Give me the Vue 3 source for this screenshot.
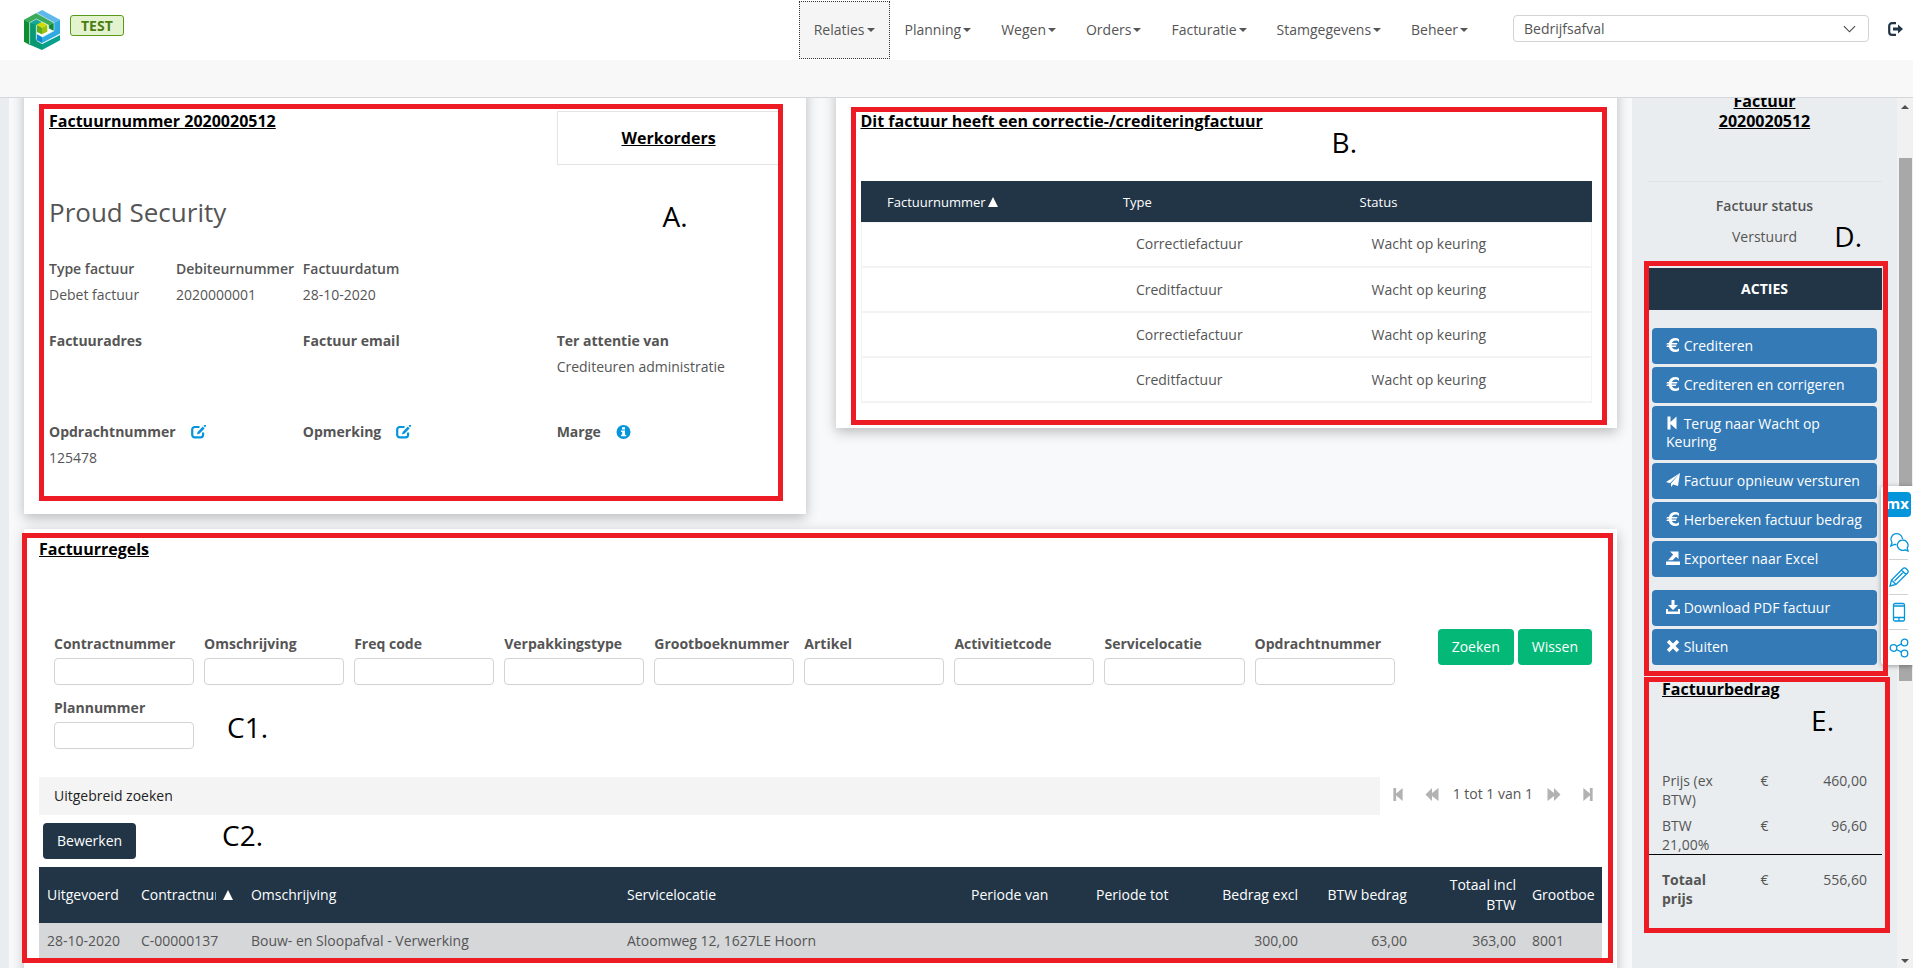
<script setup>
import { ref } from 'vue'

const menu = ['Relaties', 'Planning', 'Wegen', 'Orders', 'Facturatie', 'Stamgegevens', 'Beheer']
const afdeling = ref('Bedrijfsafval')

const correcties = [
  { type: 'Correctiefactuur', status: 'Wacht op keuring' },
  { type: 'Creditfactuur', status: 'Wacht op keuring' },
  { type: 'Correctiefactuur', status: 'Wacht op keuring' },
  { type: 'Creditfactuur', status: 'Wacht op keuring' },
]

const filters = [
  'Contractnummer', 'Omschrijving', 'Freq code', 'Verpakkingstype', 'Grootboeknummer',
  'Artikel', 'Activitietcode', 'Servicelocatie', 'Opdrachtnummer', 'Plannummer',
]

const kolommen = [
  { naam: 'Uitgevoerd', aandeel: 94, waarde: '28-10-2020' },
  { naam: 'Contractnummer', aandeel: 110, waarde: 'C-00000137', gesorteerd: true },
  { naam: 'Omschrijving', aandeel: 376, waarde: 'Bouw- en Sloopafval - Verwerking' },
  { naam: 'Servicelocatie', aandeel: 344, waarde: 'Atoomweg 12, 1627LE Hoorn' },
  { naam: 'Periode van', aandeel: 125, waarde: '' },
  { naam: 'Periode tot', aandeel: 109, waarde: '' },
  { naam: 'Bedrag excl', aandeel: 109, waarde: '300,00', rechts: true },
  { naam: 'BTW bedrag', aandeel: 109, waarde: '63,00', rechts: true },
  { naam: 'Totaal incl BTW', aandeel: 109, waarde: '363,00', rechts: true },
  { naam: 'Grootboe', aandeel: 78, waarde: '8001' },
]
const totaalAandeel = kolommen.reduce((som, k) => som + k.aandeel, 0)

const iconen = {
  euro: 'M13 1.2v3C12 3 10.900 2.600 9.600 2.600 7.700 2.600 6.500 3.500 6 5h5.500l-.6 1.500H5.700v1h4.800L9.900 9H6c.5 1.500 1.700 2.400 3.600 2.400 1.300 0 2.400-.4 3.400-1.500v3c-1 .7-2.200 1.100-3.700 1.100C6 14 3.600 12.200 2.900 9H.4L1 7.500h1.700v-1H.4L1 5h1.900C3.600 1.800 6 0 9.300 0c1.500 0 2.700.4 3.700 1.200z',
  eerste: 'M1.500 .5h3v5.400L10.500 .5v13l-6-5.400V13.500h-3z',
  verstuur: 'M14 0 0 9l4 1.300zM14 0 5 10.500V14l2.200-2.600L12 13z',
  export: 'M0 10.500h14V14H0zM4 0.500h8.500V8L10 5.800 6.500 9.200H2L7.200 3.600z',
  download: 'M5.500 0h3v5H12L7 10 2 5h3.500zM0 9h2v2.500h10V9h2v5H0z',
  sluiten: 'M3.300.8 7 4.500 10.700.8l2.500 2.500L9.500 7l3.700 3.700-2.500 2.500L7 9.500l-3.700 3.700L.8 10.700 4.500 7 .8 3.300z',
}
const acties = [
  { tekst: 'Crediteren', icoon: 'euro' },
  { tekst: 'Crediteren en corrigeren', icoon: 'euro' },
  { tekst: 'Terug naar Wacht op Keuring', icoon: 'eerste' },
  { tekst: 'Factuur opnieuw versturen', icoon: 'verstuur' },
  { tekst: 'Herbereken factuur bedrag', icoon: 'euro' },
  { tekst: 'Exporteer naar Excel', icoon: 'export' },
  { tekst: 'Download PDF factuur', icoon: 'download', nieuweGroep: true },
  { tekst: 'Sluiten', icoon: 'sluiten' },
]

const bedragen = [
  { naam: 'Prijs (ex BTW)', bedrag: '460,00' },
  { naam: 'BTW 21,00%', bedrag: '96,60' },
  { naam: 'Totaal prijs', bedrag: '556,60', totaal: true },
]
</script>

<template>
  <div class="app">
    <header class="topbar">
      <svg class="logo" viewBox="0 0 108 120" aria-label="Logo" role="img">
        <path d="M54 0 108 29 90 38 52 18 38 9z" fill="#5eb9ea" />
        <path d="M108 29v42L54 100V82l36-19V38z" fill="#2fa9e2" />
        <path d="M38 72 54 81v19L38 90z" fill="#0f86d2" />
        <path d="M0 29 37 9 90 38 74 46 37 27 17 38z" fill="#3bab5b" />
        <path d="M90 38v25L74 55V46z" fill="#118a36" />
        <path d="M0 29 17 38v67L0 95z" fill="#0e8e33" />
        <path d="M17 38 37 27 54 36 37 45v44l17 12v19L17 104z" fill="#079a72" />
        <path d="M17 38 37 27 54 36 37 45z" fill="#17a89a" />
        <path d="M54 102 108 75v16L54 120z" fill="#07a08c" />
        <path d="M54 36 70 44 54 53 38 44z" fill="#d3dc00" />
        <path d="M38 44 54 53v20L38 66z" fill="#5fae1b" />
        <path d="M70 44v21L54 73V53z" fill="#9dc20c" />
        <path d="M17 102V38l20-11 37 19v10M37 88V45M38 92l16 9 54-29M37 9l53 29v24L54 82" fill="none" stroke="#d9f0ea" stroke-width="2" />
      </svg>
      <span class="omgeving">TEST</span>
      <nav class="menu">
        <button v-for="(item, i) in menu" :key="item" type="button" :class="{ actief: i === 0 }">
          {{ item }}<i class="caret"></i>
        </button>
      </nav>
      <div class="keuze">
        <select v-model="afdeling" aria-label="Afdeling">
          <option>Bedrijfsafval</option>
        </select>
        <svg viewBox="0 0 14 8" aria-hidden="true"><path d="M1 1l6 6 6-6" fill="none" stroke="#444" stroke-width="1.200" /></svg>
      </div>
      <button type="button" class="uitloggen" aria-label="Uitloggen">
        <svg viewBox="0 0 15 14"><path d="M8 1.200H4A2.800 2.800 0 0 0 1.200 4v6A2.800 2.800 0 0 0 4 12.800h4" fill="none" stroke="#213547" stroke-width="2.200" /><path d="M5 5.500h5V2.500L15 7l-5 4.500v-3H5z" fill="#213547" /></svg>
      </button>
    </header>
    <div class="subbar"></div>

    <div class="body">
      <main class="inhoud">
        <div class="bovenrij">
          <section class="kaart factuur">
            <div class="kop">
              <h2>Factuurnummer 2020020512</h2>
              <a href="#" class="werkorders">Werkorders</a>
            </div>
            <h1>Proud Security</h1>
            <dl class="velden zes">
              <div><dt>Type factuur</dt><dd>Debet factuur</dd></div>
              <div><dt>Debiteurnummer</dt><dd>2020000001</dd></div>
              <div><dt>Factuurdatum</dt><dd>28-10-2020</dd></div>
            </dl>
            <dl class="velden drie">
              <div><dt>Factuuradres</dt><dd></dd></div>
              <div><dt>Factuur email</dt><dd></dd></div>
              <div><dt>Ter attentie van</dt><dd>Crediteuren administratie</dd></div>
            </dl>
            <dl class="velden drie laatste">
              <div v-for="veld in ['Opdrachtnummer', 'Opmerking']" :key="veld">
                <dt>
                  {{ veld }}
                  <button type="button" class="klein" :aria-label="veld + ' wijzigen'">
                    <svg viewBox="0 0 15 14"><path d="M8.500 2H3.800A2.600 2.600 0 0 0 1.200 4.600v5.200a2.600 2.600 0 0 0 2.600 2.600H9.500a2.600 2.600 0 0 0 2.600-2.600V7.500" fill="none" stroke="#0595db" stroke-width="2.200" /><path d="M6 9.500 6.600 7 11.800 1.600l1.800 1.800L8.400 8.800zM12.500.9l.9-.9h1.600v1.300l-1 1z" fill="#0595db" /></svg>
                  </button>
                </dt>
                <dd>{{ veld === 'Opdrachtnummer' ? '125478' : '' }}</dd>
              </div>
              <div>
                <dt>
                  Marge
                  <button type="button" class="klein" aria-label="Uitleg marge">
                    <svg viewBox="0 0 14 14"><circle cx="7" cy="7" r="7" fill="#0595db" /><path d="M5.500 2.200h3v2.300h-3zM4.500 5.500h4v4.200h1.200v1.500H4.500V9.700h1.200V7H4.500z" fill="#fff" /></svg>
                  </button>
                </dt>
                <dd></dd>
              </div>
            </dl>
            <div class="kader kader-a"></div>
            <span class="letter letter-a">A.</span>
          </section>

          <section class="kaart correctie">
            <h2>Dit factuur heeft een correctie-/crediteringfactuur</h2>
            <table>
              <thead>
                <tr><th>Factuurnummer<i class="sorteer"></i></th><th>Type</th><th>Status</th></tr>
              </thead>
              <tbody>
                <tr v-for="(rij, i) in correcties" :key="i">
                  <td></td><td>{{ rij.type }}</td><td>{{ rij.status }}</td>
                </tr>
              </tbody>
            </table>
            <div class="kader kader-b"></div>
            <span class="letter letter-b">B.</span>
          </section>
        </div>

        <section class="kaart regels">
          <h2>Factuurregels</h2>
          <form class="zoeken" @submit.prevent>
            <div class="filters">
              <div v-for="(naam, i) in filters" :key="naam">
                <label :for="'filter-' + i">{{ naam }}</label>
                <input :id="'filter-' + i" type="text" />
              </div>
            </div>
            <div class="knoppen">
              <button type="submit">Zoeken</button>
              <button type="reset">Wissen</button>
            </div>
          </form>
          <div class="balk">
            <button type="button" class="uitgebreid">Uitgebreid zoeken</button>
            <div class="bladeren">
              <button type="button" aria-label="Eerste"><svg viewBox="0 0 10 14"><path d="M0 0h3v6L10 0v14L3 8v6H0z" /></svg></button>
              <button type="button" aria-label="Vorige"><svg class="breed" viewBox="0 0 14 14"><path d="M7 0v5.500L14 0v14L7 8.500V14L0 7z" /></svg></button>
              <span>1 tot 1 van 1</span>
              <button type="button" aria-label="Volgende"><svg class="breed" viewBox="0 0 14 14"><path d="M7 0v5.500L0 0v14L7 8.500V14L14 7z" /></svg></button>
              <button type="button" aria-label="Laatste"><svg viewBox="0 0 10 14"><path d="M10 0H7v6L0 0v14L7 8v6h3z" /></svg></button>
            </div>
          </div>
          <button type="button" class="bewerken">Bewerken</button>
          <table>
            <colgroup>
              <col v-for="k in kolommen" :key="k.naam" :style="{ width: (k.aandeel / totaalAandeel) * 100 + '%' }" />
            </colgroup>
            <thead>
              <tr>
                <th v-for="k in kolommen" :key="k.naam" :class="{ rechts: k.rechts }">
                  <div v-if="k.gesorteerd" class="sorteerkop"><span>{{ k.naam }}</span><i class="sorteer"></i></div>
                  <template v-else>{{ k.naam }}</template>
                </th>
              </tr>
            </thead>
            <tbody>
              <tr><td v-for="k in kolommen" :key="k.naam" :class="{ rechts: k.rechts }">{{ k.waarde }}</td></tr>
            </tbody>
          </table>
          <div class="kader kader-c"></div>
          <span class="letter letter-c1">C1.</span>
          <span class="letter letter-c2">C2.</span>
        </section>
      </main>

      <div class="hulp">
        <span class="mx">mx</span>
        <button type="button" aria-label="Reacties"><svg viewBox="0 0 20 20"><path d="M7.500 12.500H5.500L1.800 14 3 10.800A5.800 5.800 0 1 1 13.500 7" /><path d="M13.500 8a5.200 5.200 0 1 0 2.500 9.800l3 1.200-.8-3A5.200 5.200 0 0 0 13.500 8z" /></svg></button>
        <button type="button" aria-label="Bewerken"><svg viewBox="0 0 20 20"><path d="M1 19l1.500-6L14 1.500a2 2 0 0 1 3 0l1.500 1.500a2 2 0 0 1 0 3L7 17.500zM2.500 13 7 17.500M12.500 3l4.500 4.500M14.500 5l-9 9" /></svg></button>
        <button type="button" aria-label="Mobiel"><svg viewBox="0 0 20 20"><path d="M6 1.500h8a1.500 1.500 0 0 1 1.500 1.500v14.500a1.500 1.500 0 0 1-1.500 1.500H6a1.500 1.500 0 0 1-1.500-1.500V3A1.500 1.500 0 0 1 6 1.500zM4.500 4h11M4.500 15.500h11M10 15.500v3" /></svg></button>
        <button type="button" aria-label="Delen"><svg viewBox="0 0 20 20"><circle cx="4.500" cy="10" r="3.300" /><circle cx="15.500" cy="4.500" r="3.300" /><circle cx="15.500" cy="15.500" r="3.300" /><path d="M7.400 8.500l5.200-2.600M7.400 11.500l5.200 2.600" /></svg></button>
      </div>

      <aside class="zijbalk">
        <h2>Factuur<br />2020020512</h2>
        <hr />
        <p class="statuskop">Factuur status</p>
        <p class="status">Verstuurd</p>
        <section class="acties">
          <h3>ACTIES</h3>
          <div class="lijst">
            <button v-for="a in acties" :key="a.tekst" type="button" :class="{ groep: a.nieuweGroep }">
              <svg viewBox="0 0 14 14" aria-hidden="true"><path :d="iconen[a.icoon]" /></svg>
              {{ a.tekst }}
            </button>
          </div>
          <div class="kader kader-d"></div>
          <span class="letter letter-d">D.</span>
        </section>
        <section class="bedrag">
          <h2>Factuurbedrag</h2>
          <table>
            <tbody>
              <tr v-for="b in bedragen" :key="b.naam" :class="{ totaal: b.totaal }">
                <th scope="row">{{ b.naam }}</th><td class="valuta">€</td><td class="rechts">{{ b.bedrag }}</td>
              </tr>
            </tbody>
          </table>
          <div class="kader kader-e"></div>
          <span class="letter letter-e">E.</span>
        </section>
      </aside>

      <div class="schuif" aria-hidden="true"><i class="op"></i><b></b><i class="neer"></i></div>
    </div>
  </div>
</template>

<style>
body { margin: 0; background: #fff; }
</style>

<style scoped>
* { box-sizing: border-box; }
.app {
  display: flex; flex-direction: column; height: 100vh; padding-bottom: 3px;
  font: 14px/20px "Open Sans", "Noto Sans", sans-serif; color: #555; overflow: hidden;
}
button, input, select { font: inherit; color: inherit; margin: 0; }
button { cursor: pointer; border: 0; background: none; padding: 0; }
h1, h2, h3, p, dl, dd { margin: 0; }
h2 { font-size: 16px; line-height: 22px; font-weight: 700; color: #000; text-decoration: underline; }
table { border-collapse: collapse; width: 100%; table-layout: fixed; }
th, td { padding: 0; text-align: left; font-weight: 400; }
svg { display: block; }

.topbar { display: flex; align-items: flex-start; height: 60px; flex: none; padding: 0 10px 0 24px; }
.logo { width: 36px; height: 40px; margin-top: 10px; flex: none; }
.omgeving {
  margin: 15px 0 0 10px; padding: 0 10px; height: 21px; line-height: 19px; font-weight: 700;
  color: #4a7d12; background: #e4f3cf; border: 1px solid #5a9a1a; border-radius: 3px;
}
.menu { display: flex; margin-left: auto; padding-top: 1px; }
.menu button { display: flex; align-items: center; height: 58px; padding: 0 14px; border: 1px dotted transparent; white-space: nowrap; }
.menu button.actief { background: #f5f5f5; border-color: #333; }
.caret { margin-left: 2px; border: 4px solid transparent; border-top-color: #555; border-bottom: 0; }
.keuze { position: relative; flex: 0 1 356px; margin: 15px 19px 0 30px; }
.keuze select {
  display: block; appearance: none; width: 100%; height: 27px; padding: 0 10px; line-height: 20px;
  background: #fff; border: 1px solid #d2d3d5; border-radius: 4px;
}
.keuze svg { position: absolute; right: 13px; top: 10px; width: 13px; height: 8px; pointer-events: none; }
.uitloggen { margin-top: 22px; }
.uitloggen svg { width: 15px; height: 14px; }
.subbar { height: 38px; flex: none; background: #f8f8f8; border-bottom: 1px solid #d5d8da; }

.body { position: relative; flex: 1; min-height: 0; display: flex; overflow: hidden; }
.inhoud { flex: 1; min-width: 0; padding: 0 15px; border-left: 9px solid #e9edf0; background: #f8f9fb; overflow: hidden; }
.bovenrij { display: grid; grid-template-columns: 1fr 1fr; gap: 30px; align-items: start; margin: -16px 0 15px; }
.kaart { position: relative; background: #fff; box-shadow: 0 4px 12px rgba(0, 0, 0, .25); }
.bovenrij .kaart { padding: 28px 25px 0; }

.kop { display: grid; grid-template-columns: repeat(3, 1fr); gap: 30px; }
.kop h2 { grid-column: span 2; }
.werkorders {
  height: 54px; margin-top: 1px; line-height: 52px; border: 1px solid #e4e4e4; text-align: center;
  font-size: 16px; font-weight: 700; color: #000;
}
h1 { margin: 29px 0; font-size: 26px; line-height: 36px; font-weight: 400; }
.velden { display: grid; gap: 30px; margin-bottom: 26px; white-space: nowrap; }
.zes { grid-template-columns: repeat(6, minmax(0, 1fr)); }
.drie { grid-template-columns: repeat(3, minmax(0, 1fr)); margin-bottom: 45px; }
.velden.laatste { margin-bottom: 0; padding-bottom: 46px; }
.velden dt { display: flex; align-items: center; gap: 15px; height: 20px; margin-bottom: 6px; font-weight: 700; }
.velden.zes dt { font-weight: 600; }
.velden dd { height: 20px; }
.klein svg { width: 15px; height: 14px; }

.correctie table { margin: 49px 0 25px; }
.correctie th { height: 41px; padding: 2px 15px 0; background: #213547; color: #fff; font-size: 13px; }
.correctie th:first-child { width: 33.8%; padding-left: 26px; }
.correctie th:nth-child(2) { width: 32.4%; }
.correctie tbody tr { border: 1px solid #f3f3f3; border-bottom-width: 2px; }
.correctie td { height: 45px; padding: 0 27px; }
.correctie td:nth-child(2) { padding-left: 28px; }
.sorteer { display: inline-block; flex: none; margin-left: 2px; border: 5px solid transparent; border-bottom: 10px solid #fff; border-top: 0; }

.regels { padding: 9px 15px 0; min-height: 600px; }
.zoeken { display: flex; align-items: flex-start; margin: 69px 10px 28px 15px; }
.filters { flex: 1; display: grid; grid-template-columns: repeat(9, minmax(0, 1fr)); gap: 13px 10px; padding-top: 5px; margin-right: 43px; }
.filters label { display: block; height: 24px; font-weight: 700; white-space: nowrap; }
.filters input { display: block; width: 100%; height: 27px; border: 1px solid #d2d3d5; border-radius: 4px; background: #fff; padding: 0 8px; }
.knoppen { display: flex; gap: 4px; }
.knoppen button { height: 36px; padding: 0 14px; border-radius: 4px; background: #04b978; color: #fff; }
.balk { display: flex; height: 38px; }
.uitgebreid { flex: 1; padding-left: 15px; text-align: left; background: #f4f4f4; color: #222; }
.bladeren { display: flex; align-items: center; height: 34px; padding: 0 9px 0 13px; }
.bladeren button svg { width: 10px; height: 13px; fill: #b2b2b2; }
.bladeren button svg.breed { width: 14px; margin-left: 22px; }
.bladeren span { margin: 0 14px; }
.bladeren span + button svg.breed { margin: 0 22px 0 0; }
.bewerken { display: block; height: 36px; margin: 8px 4px; padding: 0 14px; border-radius: 4px; background: #213547; color: #fff; }
.regels th { height: 56px; padding: 0 8px; background: #213547; color: #fff; overflow: hidden; }
.regels td { height: 36px; padding: 0 8px; background: #d5d7d9; white-space: nowrap; }
.regels .rechts, .bedrag .rechts { text-align: right; }
.sorteerkop { display: flex; align-items: center; margin-right: 2px; }
.sorteerkop span { flex: 1; min-width: 0; overflow: hidden; }
.sorteerkop .sorteer { margin-left: 7px; }

.zijbalk { flex: 0 0 265px; padding: 0 15px; background: #e9edf0; }
.zijbalk > h2 { margin-top: -7px; line-height: 20px; text-align: center; }
.zijbalk hr { margin: 50px 0 14px; border: 0; border-top: 1px solid #e0e4e7; }
.zijbalk p { text-align: center; }
.statuskop { font-weight: 600; }
.zijbalk .status { margin: 11px 0 21px; }
.acties { position: relative; }
.acties h3 { height: 42px; background: #213547; color: #fff; font-size: 14px; line-height: 42px; font-weight: 700; text-align: center; }
.lijst { display: flex; flex-direction: column; gap: 3px; padding: 18px 5px 0; }
.lijst button { padding: 9px 10px 9px 14px; border-radius: 4px; background: #337ab7; color: #fff; text-align: left; line-height: 18px; }
.lijst button.groep { margin-top: 10px; }
.lijst svg { display: inline-block; width: 14px; height: 14px; vertical-align: -1px; fill: #fff; }
.bedrag { position: relative; padding-top: 13px; }
.bedrag h2 { padding-left: 15px; }
.bedrag table { margin-top: 71px; line-height: 19px; }
.bedrag th { padding: 0 0 7px 15px; vertical-align: top; }
.bedrag td { padding: 0 0 7px; vertical-align: top; }
.bedrag tr:nth-child(2) > * { padding-bottom: 0; }
.bedrag .valuta { text-align: center; }
.bedrag td.rechts { padding-right: 15px; }
.bedrag .totaal { border-top: 1px solid #000; }
.bedrag .totaal > * { padding-top: 15px; }
.bedrag .totaal th { font-weight: 700; padding-right: 10px; }

.schuif { flex: 0 0 16px; display: flex; flex-direction: column; align-items: center; padding: 7px 0 5px; background: #f1f1f1; }
.schuif i { border: 4px solid transparent; }
.schuif .op { border-top: 0; border-bottom-color: #505050; }
.schuif .neer { border-bottom: 0; border-top-color: #505050; margin-top: auto; }
.schuif b { width: 13px; height: 61%; margin-top: 49px; background: #a8a8a8; }

/* Zwevende werkbalk aan de rechterrand */
.hulp {
  position: absolute; z-index: 1; top: 388px; right: 0; width: 32px; padding: 6px 2px 0 8px;
  background: #fff; border-radius: 4px 0 0 4px; box-shadow: 0 1px 5px rgba(0, 0, 0, .35);
}
.mx { display: block; height: 25px; line-height: 22px; margin: 0 0 8px -6px; padding-right: 2px; border-radius: 4px; background: #0595db; color: #fff; font-size: 15px; font-weight: 700; text-align: right; }
.hulp button { display: block; width: 19px; height: 35px; padding: 7px 0; border-bottom: 1px solid #d0d2d4; }
.hulp button:last-child { border: 0; }
.hulp svg { width: 20px; height: 20px; fill: none; stroke: #0595db; stroke-width: 1.3; }

/* Toelichtende kaders en letters over de schermdelen */
.kader { position: absolute; z-index: 2; border: 5px solid #ed1c24; pointer-events: none; }
.letter { position: absolute; z-index: 2; color: #000; font-size: 28px; font-weight: 500; line-height: 38px; white-space: nowrap; }
.kader-a { top: 22px; right: 23px; bottom: 13px; left: 15px; }
.kader-b { top: 25px; right: 10px; bottom: 3px; left: 15px; }
.kader-c { top: 4px; right: 4px; left: -2px; height: 430px; }
.kader-d { top: -7px; right: -6px; bottom: -11px; left: -3px; }
.kader-e { top: 12px; right: -8px; bottom: -18px; left: -3px; }
.letter-a { top: 115px; right: 118px; }
.letter-b { top: 41px; right: 260px; }
.letter-c1 { top: 179px; left: 203px; }
.letter-c2 { top: 287px; left: 198px; }
.letter-d { top: -51px; right: 20px; }
.letter-e { top: 36px; right: 48px; }
</style>
